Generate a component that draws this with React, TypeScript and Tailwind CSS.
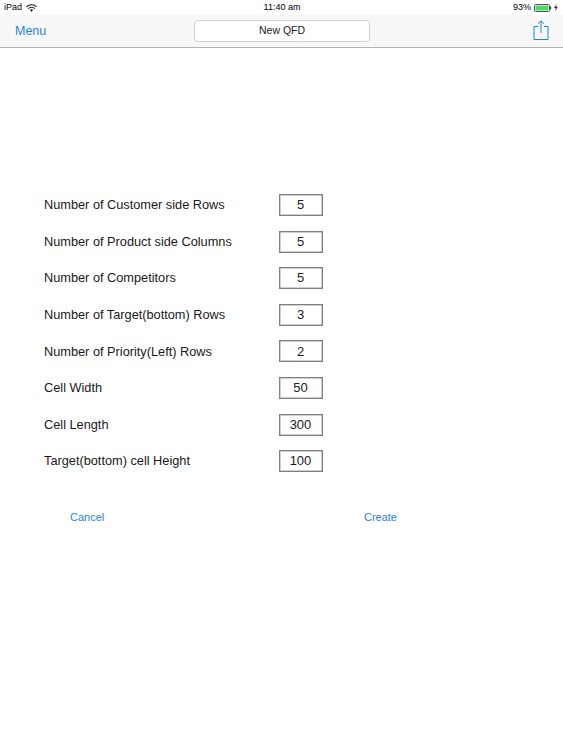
const rows: [string, string][] = [
  ["Number of Customer side Rows", "5"],
  ["Number of Product side Columns", "5"],
  ["Number of Competitors", "5"],
  ["Number of Target(bottom) Rows", "3"],
  ["Number of Priority(Left) Rows", "2"],
  ["Cell Width", "50"],
  ["Cell Length", "300"],
  ["Target(bottom) cell Height", "100"],
];

export default function App() {
  return (
    <div className="w-[563px] h-[750px] bg-white overflow-hidden font-['Liberation_Sans',Arial,sans-serif] text-[#1a1a1a]">
      <div className="h-[15px] bg-white flex items-center justify-between text-[9px] text-black">
        <div className="flex items-center gap-[4px] pl-[4px] w-[190px]">
          <span>iPad</span>
          <svg width="11" height="8" viewBox="0 0 11 8" fill="none" stroke="#111" strokeWidth="1.1">
            <path d="M0.5 2.9 A7 7 0 0 1 10.5 2.9" />
            <path d="M2.3 4.6 A4.4 4.4 0 0 1 8.7 4.6" />
            <path d="M5.5 7.8 L3.9 6 A2.3 2.3 0 0 1 7.1 6 Z" fill="#111" stroke="none" />
          </svg>
        </div>
        <span className="pl-[1px]">11:40 am</span>
        <div className="flex items-center justify-end gap-[2px] pr-[5px] w-[190px]">
          <span>93%</span>
          <svg width="18" height="8" viewBox="0 0 18 8" className="ml-[1px]">
            <rect x="0.5" y="0.5" width="15" height="7" rx="1" fill="none" stroke="#555" />
            <rect x="1.5" y="1.5" width="13" height="5" fill="#4cd964" />
            <rect x="16" y="2.5" width="1.2" height="3" fill="#444" />
          </svg>
          <svg width="4" height="7" viewBox="0 0 4 7"><path d="M2.6 0 L0.2 4 H1.8 L1.3 7 L3.8 3 H2.2 Z" fill="#222" /></svg>
        </div>
      </div>
      <div className="h-[33px] bg-[#f7f7f7] border-b border-[#b2b2b2] flex items-center justify-between relative">
        <span className="pl-[15px] text-[12.5px] text-[#1f84e6]">Menu</span>
        <div className="absolute left-[194px] top-[5px] w-[176px] h-[22px] bg-white border border-[#d4d4d4] rounded-[4px] flex items-center justify-center text-[10.5px] text-[#222]">
          New QFD
        </div>
        <svg width="16" height="20" viewBox="0 0 16 20" fill="none" stroke="#1f84e6" strokeWidth="1" className="mr-[14px] mb-[2px]">
          <path d="M5 6.5 H1 V19.5 H15 V6.5 H11" />
          <path d="M8 13 V1 M5 3.7 L8 0.9 L11 3.7" />
        </svg>
      </div>
      <div className="pt-[146px] pl-[44px] flex flex-col gap-[14.6px]">
        {rows.map(([label, value]) => (
          <div key={label} className="flex items-center h-[22px]">
            <span className="w-[235px] text-[12.75px] leading-none pt-[1px]">{label}</span>
            <div className="w-[44px] h-[22px] border border-[#808080] shadow-[inset_0_0_0_0.5px_#a0a0a0] flex items-center justify-center text-[13px] pr-[1px]">{value}</div>
          </div>
        ))}
      </div>
      <div className="flex justify-between w-[327px] ml-[70px] mt-[37px] text-[11px] text-[#1f84e6]">
        <span>Cancel</span>
        <span>Create</span>
      </div>
    </div>
  );
}
